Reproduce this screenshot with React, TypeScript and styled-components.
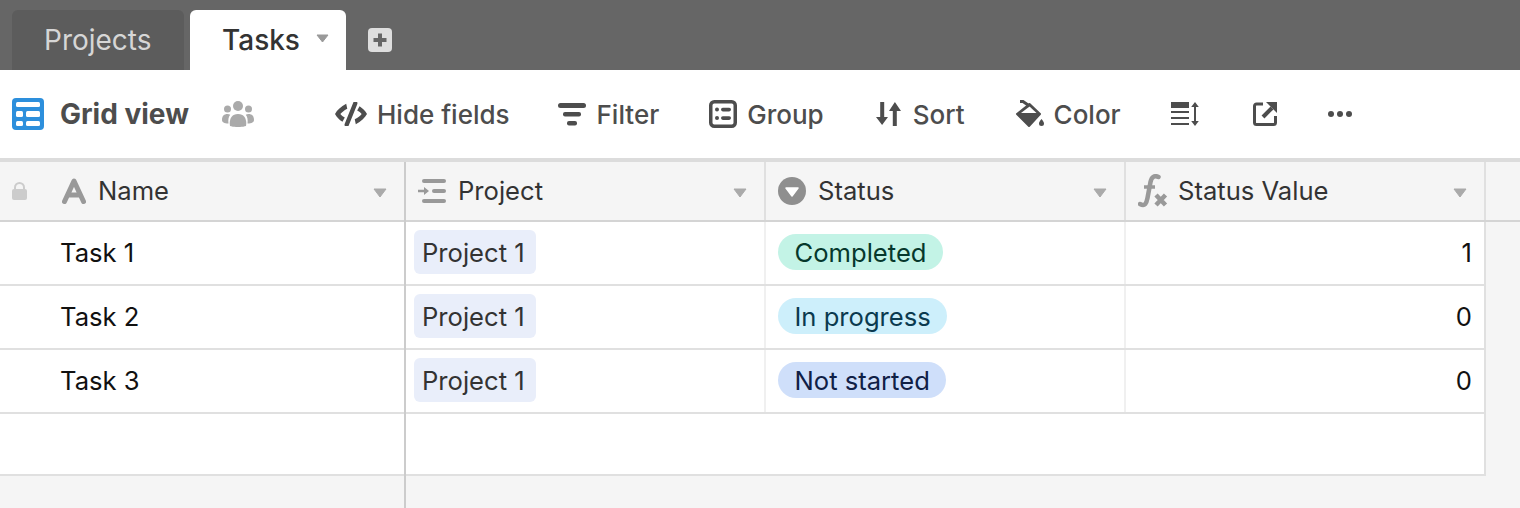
import React from "react";
import styled, { createGlobalStyle } from "styled-components";

const Global = createGlobalStyle`
  html, body { margin: 0; padding: 0; height: 100%; background: #f5f5f5; overflow: hidden; }
  #root { height: 100%; }
  * { box-sizing: border-box; }
`;

const Page = styled.div`
  width: 1520px;
  height: 508px;
  display: flex;
  flex-direction: column;
  font-family: Inter, "Liberation Sans", sans-serif;
  font-size: 25.6px;
  color: #333;
  overflow: hidden;
`;

const TabBar = styled.div`
  height: 70px;
  flex: none;
  background: #666;
  display: flex;
  align-items: flex-end;
  padding-left: 12px;
`;

const Tab = styled.div<{ $active?: boolean }>`
  height: 60px;
  width: ${(p) => (p.$active ? 156 : 172)}px;
  margin-right: ${(p) => (p.$active ? 22 : 6)}px;
  border-radius: 6px 6px 0 0;
  background: ${(p) => (p.$active ? "#fff" : "#5c5c5c")};
  color: ${(p) => (p.$active ? "#333" : "#d6d6d6")};
  font-size: 28px;
  font-weight: ${(p) => (p.$active ? 500 : 400)};
  display: flex;
  align-items: center;
  padding-left: 32px;
  padding-bottom: 1px;
`;

const TabCaret = styled.svg`
  margin-left: 16px;
  margin-bottom: 2px;
`;

const AddTab = styled.svg`
  align-self: center;
  margin-top: 10px;
`;

const Toolbar = styled.div`
  height: 88px;
  flex: none;
  background: #fff;
  display: flex;
  align-items: center;
  padding-left: 12px;
  color: #4d4d4d;
  font-size: 26px;
  font-weight: 500;
`;

const ViewName = styled.span`
  font-weight: 700;
  font-size: 28px;
  margin-left: 16px;
  margin-right: 33px;
  color: #4d4d4d;
`;

const ToolItem = styled.div<{ $left: number; $gap?: number }>`
  display: flex;
  align-items: center;
  gap: ${(p) => p.$gap ?? 9}px;
  margin-left: ${(p) => p.$left}px;
`;

const Grid = styled.div`
  flex: 1;
  display: flex;
  border-top: 4px solid #dcdcdc;
  background: #f5f5f5;
  min-height: 0;
`;

const FrozenPane = styled.div`
  width: 406px;
  flex: none;
  border-right: 2px solid #ccc;
`;

const ScrollPane = styled.div`
  flex: 1;
  min-width: 0;
`;

const HeadRow = styled.div`
  height: 60px;
  display: flex;
  border-bottom: 2px solid #d4d4d4;
  background: #f5f5f5;
`;

const HeadCell = styled.div`
  width: 360px;
  flex: none;
  display: flex;
  align-items: center;
  border-right: 2px solid #e0e0e0;
  padding: 0 17px 0 12px;
  color: #333;
`;

const FrozenHead = styled.div`
  width: 100%;
  display: flex;
  align-items: center;
  padding: 0 17px 0 12px;
  color: #333;
`;

const HeadLabel = styled.span<{ $left: number }>`
  margin-left: ${(p) => p.$left}px;
  flex: 1;
  padding-bottom: 2px;
`;

const Caret = styled.svg`
  flex: none;
  margin-top: 3px;
`;

const Row = styled.div<{ $w?: number }>`
  height: 64px;
  width: ${(p) => (p.$w ? `${p.$w}px` : "100%")};
  display: flex;
  background: #fff;
  border-bottom: 2px solid #e0e0e0;
`;

const NameCell = styled.div`
  padding: 0 0 2px 60px;
  display: flex;
  align-items: center;
  color: #111;
`;

const Cell = styled.div<{ $end?: boolean }>`
  width: 360px;
  flex: none;
  display: flex;
  align-items: center;
  padding: 0 ${(p) => (p.$end ? 12 : 8)}px 2px 8px;
  border-right: 2px solid ${(p) => (p.$end ? "#e0e0e0" : "#f0f0f0")};
  justify-content: ${(p) => (p.$end ? "flex-end" : "flex-start")};
  color: #111;
`;

const ProjectChip = styled.span`
  height: 44px;
  padding: 0 11px 0 8px;
  display: flex;
  align-items: center;
  border-radius: 6px;
  background: #e9eefa;
  color: #333;
`;

const StatusChip = styled.span<{ $bg: string; $fg: string }>`
  height: 36px;
  margin-left: 4px;
  padding: 0 16.5px;
  display: flex;
  align-items: center;
  border-radius: 18px;
  background: ${(p) => p.$bg};
  color: ${(p) => p.$fg};
`;

const BlankRow = styled.div<{ $w?: number }>`
  height: 62px;
  width: ${(p) => (p.$w ? `${p.$w}px` : "100%")};
  background: #fff;
  border-bottom: 2px solid #e0e0e0;
  border-right: ${(p) => (p.$w ? "2px solid #e0e0e0" : "none")};
`;

const Tri = () => (
  <Caret width="14" height="10" viewBox="0 0 14 10">
    <path d="M1 1h12L7 9z" fill="#aaa" stroke="#aaa" strokeWidth="1" strokeLinejoin="round" />
  </Caret>
);

const rows = [
  { name: "Task 1", status: "Completed", bg: "#c3f3e6", fg: "#06382c", value: 1 },
  { name: "Task 2", status: "In progress", bg: "#cdeffb", fg: "#0b3a4f", value: 0 },
  { name: "Task 3", status: "Not started", bg: "#cfdffa", fg: "#102046", value: 0 },
];

export default function App() {
  return (
    <Page>
      <Global />
      <TabBar>
        <Tab>Projects</Tab>
        <Tab $active>
          Tasks
          <TabCaret width="13" height="9" viewBox="0 0 13 9">
            <path d="M1 1h11L6.500 8z" fill="#999" stroke="#999" strokeLinejoin="round" />
          </TabCaret>
        </Tab>
        <AddTab width="24" height="24" viewBox="0 0 24 24">
          <rect width="24" height="24" rx="4" fill="#dedede" />
          <path d="M12 5.500v13M5.500 12h13" stroke="#666" strokeWidth="4" />
        </AddTab>
      </TabBar>
      <Toolbar>
        <svg width="32" height="32" viewBox="0 0 32 32">
          <rect width="32" height="32" rx="4" fill="#2d8fdc" />
          <g fill="#fff">
            <rect x="4" y="4" width="24" height="5" rx="1.500" />
            <rect x="4" y="13" width="7" height="6" rx="1.500" />
            <rect x="14" y="13" width="14" height="6" rx="1.500" />
            <rect x="4" y="23" width="7" height="5" rx="1.500" />
            <rect x="14" y="23" width="14" height="5" rx="1.500" />
          </g>
        </svg>
        <ViewName>Grid view</ViewName>
        <svg width="32" height="26" viewBox="0 0 32 26">
          <g fill="#aaa">
            <circle cx="16" cy="5" r="5" />
            <circle cx="5.500" cy="8" r="3.500" />
            <circle cx="26.500" cy="8" r="3.500" />
            <path d="M8 25c-1-6 1-12 8-12s9 6 8 12c-4 1.400-12 1.400-16 0z" />
            <path d="M6.500 22.500C2 22.500 0 21 0 19c0-4 2-6 5.500-6 1 0 2 .2 2.700.7-1.700 2-2.200 5.300-1.700 8.800z" />
            <path d="M25.500 22.500C30 22.500 32 21 32 19c0-4-2-6-5.500-6-1 0-2 .2-2.700.7 1.700 2 2.200 5.300 1.700 8.800z" />
          </g>
        </svg>
        <ToolItem $left={81} $gap={10}>
          <svg width="32" height="24" viewBox="1 1 30 22">
            <path d="M11.500 2.500C6.500 5 3 8.500 1 12c1.500 2.800 4 5.400 7 7.300l2.200-4C8.500 14.500 7 13.300 6 12c1.500-1.800 3.300-3.300 6.500-5z" fill="#4d4d4d" />
            <path d="M20.500 21.500c5-2.500 8.500-6 10.500-9.500-1.500-2.800-4-5.400-7-7.300l-2.200 4C23.500 9.500 25 10.700 26 12c-1.500 1.800-3.300 3.300-6.500 5z" fill="#4d4d4d" />
            <path d="M20 2 12 22" stroke="#4d4d4d" strokeWidth="4" strokeLinecap="round" />
          </svg>
          Hide fields
        </ToolItem>
        <ToolItem $left={48} $gap={11}>
          <svg width="28" height="23" viewBox="0 0 28 23" fill="#4d4d4d">
            <rect x="0" y="0" width="28" height="5" rx="2.500" />
            <rect x="5" y="9" width="18" height="4.500" rx="2" />
            <rect x="9" y="18" width="10" height="4.500" rx="2" />
          </svg>
          Filter
        </ToolItem>
        <ToolItem $left={50} $gap={10}>
          <svg width="28" height="28" viewBox="0 0 28 28">
            <rect x="1.750" y="1.750" width="24.500" height="24.500" rx="3.500" fill="none" stroke="#4d4d4d" strokeWidth="3.500" />
            <g fill="#4d4d4d">
              <circle cx="8" cy="9.500" r="2" />
              <circle cx="8" cy="18" r="2" />
              <rect x="12" y="7.800" width="10" height="3.600" rx="1.800" />
              <rect x="12" y="16.300" width="10" height="3.600" rx="1.800" />
            </g>
          </svg>
          Group
        </ToolItem>
        <ToolItem $left={52} $gap={12}>
          <svg width="25" height="26" viewBox="0 0 25 26" fill="#4d4d4d">
            <path d="M4.200 1h4v15H12l-5.900 8L0 16h4.200z" />
            <path d="M16.800 25h4V10H25L18.900 1 13 10h3.800z" />
          </svg>
          Sort
        </ToolItem>
        <ToolItem $left={50} $gap={9}>
          <svg width="30" height="28" viewBox="0 0 30 28">
            <path d="M2 14 14.500 4 25 14 14 26z" fill="#4d4d4d" stroke="#4d4d4d" strokeWidth="2" strokeLinejoin="round" />
            <path d="M6 13 14.500 6.500 21.500 13z" fill="#fff" />
            <path d="M5 1.500h3l6.500 4.500" stroke="#4d4d4d" strokeWidth="3" fill="none" />
            <path d="M26.500 19c1.500 2 2.500 3.200 2.500 4.500a2.500 2.500 0 0 1-5 0c0-1.300 1-2.500 2.500-4.500z" fill="#4d4d4d" />
          </svg>
          Color
        </ToolItem>
        <ToolItem $left={50}>
          <svg width="29" height="24" viewBox="0 0 29 24" fill="#4d4d4d">
            <rect x="0" y="0" width="18" height="6" />
            <rect x="0" y="9" width="18" height="2" />
            <rect x="0" y="15" width="18" height="2" />
            <rect x="0" y="21" width="18" height="2" />
            <path d="M23 5h-2.800L24 0l3.800 5H25v14h2.800L24 24l-3.800-5H23z" />
          </svg>
        </ToolItem>
        <ToolItem $left={53}>
          <svg width="24" height="24" viewBox="0 0 24 24" fill="none" stroke="#4d4d4d">
            <path d="M10 2H3.500a2 2 0 0 0-2 2v16.500a2 2 0 0 0 2 2H20.500a2 2 0 0 0 2-2V14" strokeWidth="3" />
            <path d="M10 15 19 6" strokeWidth="4" />
            <path d="M13 0h11v11z" fill="#4d4d4d" stroke="none" />
          </svg>
        </ToolItem>
        <ToolItem $left={51}>
          <svg width="24" height="8" viewBox="0 0 24 8" fill="#4d4d4d">
            <circle cx="3" cy="4" r="3" />
            <circle cx="12" cy="4" r="3" />
            <circle cx="21" cy="4" r="3" />
          </svg>
        </ToolItem>
      </Toolbar>
      <Grid>
        <FrozenPane>
          <HeadRow>
            <FrozenHead>
              <svg width="15" height="18" viewBox="0 0 15 18" fill="#ccc">
                <rect x="0" y="7" width="15" height="11" rx="2" />
                <path d="M3 8V5.500a4.500 4.500 0 0 1 9 0V8" fill="none" stroke="#ccc" strokeWidth="2" />
              </svg>
              <svg width="24" height="26" viewBox="0 0 24 26" style={{ marginLeft: 35 }}>
                <path d="M2.500 23.500 12 3l9.500 20.500M6.500 17h11" fill="none" stroke="#999" strokeWidth="5" strokeLinecap="round" strokeLinejoin="round" />
              </svg>
              <HeadLabel $left={12}>Name</HeadLabel>
              <Tri />
            </FrozenHead>
          </HeadRow>
          {rows.map((r) => (
            <Row key={r.name}>
              <NameCell>{r.name}</NameCell>
            </Row>
          ))}
          <BlankRow />
        </FrozenPane>
        <ScrollPane>
          <HeadRow>
            <HeadCell>
              <svg width="28" height="24" viewBox="0 0 28 24" fill="#999">
                <rect x="4" y="0" width="24" height="4" rx="2" />
                <rect x="14" y="10" width="14" height="4" rx="2" />
                <path d="M0 10.800h6V8l5 4-5 4v-2.800H0z" />
                <rect x="4" y="20" width="24" height="4" rx="2" />
              </svg>
              <HeadLabel $left={12}>Project</HeadLabel>
              <Tri />
            </HeadCell>
            <HeadCell>
              <svg width="28" height="28" viewBox="0 0 28 28">
                <circle cx="14" cy="14" r="14" fill="#8f8f8f" />
                <path d="M8 11h12l-6 8z" fill="#fff" stroke="#fff" strokeWidth="1.500" strokeLinejoin="round" />
              </svg>
              <HeadLabel $left={12}>Status</HeadLabel>
              <Tri />
            </HeadCell>
            <HeadCell>
              <svg width="30" height="34" viewBox="0 0 30 34" fill="none" stroke="#999">
                <path d="M2 30c5 3 6.500-1 7.500-6l3-16c1-5 4-7 8-5" strokeWidth="4.500" strokeLinecap="round" />
                <path d="M6 13h11" strokeWidth="3.500" />
                <path d="M18 21l9.500 10M27.500 21 18 31" strokeWidth="4.500" />
              </svg>
              <HeadLabel $left={10}>Status Value</HeadLabel>
              <Tri />
            </HeadCell>
          </HeadRow>
          {rows.map((r) => (
            <Row key={r.name} $w={1080}>
              <Cell>
                <ProjectChip>Project 1</ProjectChip>
              </Cell>
              <Cell>
                <StatusChip $bg={r.bg} $fg={r.fg}>{r.status}</StatusChip>
              </Cell>
              <Cell $end>{r.value}</Cell>
            </Row>
          ))}
          <BlankRow $w={1080} />
        </ScrollPane>
      </Grid>
    </Page>
  );
}
